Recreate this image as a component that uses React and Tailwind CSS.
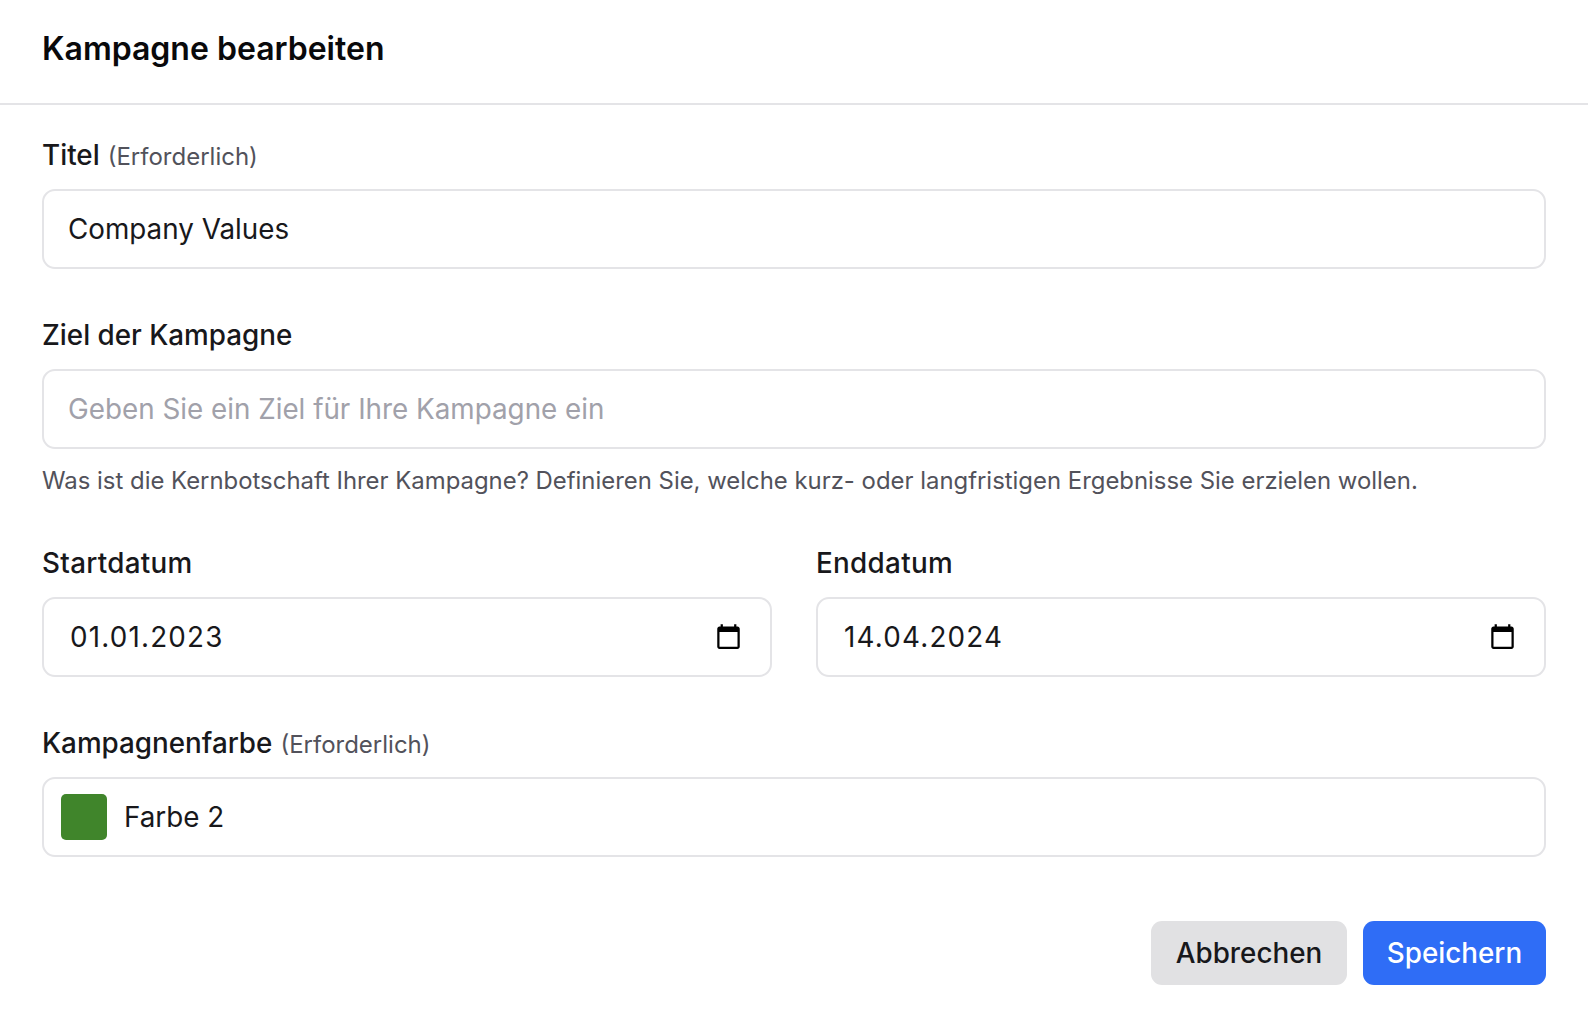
import React from 'react';

const CalendarIcon = () => (
  <svg viewBox="0 0 24 24" className="mb-[2px] h-[27px] w-[27px] shrink-0" fill="#000">
    <path d="M20 3h-1V1h-2v2H7V1H5v2H4c-1.1 0-2 .9-2 2v16c0 1.1.9 2 2 2h16c1.1 0 2-.9 2-2V5c0-1.1-.9-2-2-2zm0 18H4V8h16v13z" />
  </svg>
);

const Label = ({ children, hint, className = '' }) => (
  <div className={`flex items-baseline gap-[8px] h-[34px] text-[27.8px] leading-[32px] font-medium text-[#18181b] ${className}`}>
    {children}
    {hint && <span className="text-[24px] font-normal text-[#52525b]">{hint}</span>}
  </div>
);

const DateField = ({ label, value }) => (
  <div className="flex-1">
    <Label className="tracking-[0.3px]">{label}</Label>
    <div className="mt-[16px] flex h-[80px] items-center justify-between rounded-[13px] border-2 border-[#e4e4e7] pl-[26px] pr-[28px]">
      <span className="pt-[2px] text-[27.8px] tracking-[1.2px] text-[#18181b]">{value}</span>
      <CalendarIcon />
    </div>
  </div>
);

export default function App() {
  return (
    <div className="h-[1012px] bg-white font-['Inter',sans-serif]">
      <div className="flex h-[105px] items-center border-b-2 border-[#e4e4e7] px-[42px] pb-[6px]">
        <h1 className="text-[32px] font-semibold text-[#09090b]">Kampagne bearbeiten</h1>
      </div>

      <div className="px-[42px] pt-[34px]">
        <Label hint="(Erforderlich)">Titel</Label>
        <input
          defaultValue="Company Values"
          className="mt-[16px] h-[80px] w-full rounded-[13px] border-2 border-[#e4e4e7] px-[24px] text-[27.8px] text-[#18181b] outline-none"
        />

        <div className="mt-[50px]">
          <Label>Ziel der Kampagne</Label>
        </div>
        <input
          placeholder="Geben Sie ein Ziel für Ihre Kampagne ein"
          className="mt-[16px] h-[80px] w-full rounded-[13px] border-2 border-[#e4e4e7] px-[24px] text-[27.8px] text-[#18181b] outline-none placeholder:text-[#a1a1aa]"
        />
        <p className="mt-[15px] text-[23.9px] leading-[34px] text-[#52525b]">
          Was ist die Kernbotschaft Ihrer Kampagne? Definieren Sie, welche kurz- oder langfristigen Ergebnisse Sie erzielen wollen.
        </p>

        <div className="mt-[49px] flex gap-[44px]">
          <DateField label="Startdatum" value="01.01.2023" />
          <DateField label="Enddatum" value="14.04.2024" />
        </div>

        <div className="mt-[50px]">
          <Label hint="(Erforderlich)">Kampagnenfarbe</Label>
        </div>
        <div className="mt-[16px] flex h-[80px] items-center gap-[17px] rounded-[13px] border-2 border-[#e4e4e7] pl-[17px]">
          <div className="h-[46px] w-[46px] rounded-[5px] bg-[#40852b]" />
          <span className="pt-[2px] text-[27.8px] text-[#18181b]">Farbe 2</span>
        </div>

        <div className="mt-[64px] flex justify-end gap-[16px]">
          <button className="h-[64px] w-[196px] rounded-[11px] bg-[#e1e1e3] pt-[2px] text-[27.8px] font-medium text-[#18181b]">
            Abbrechen
          </button>
          <button className="h-[64px] w-[183px] rounded-[11px] bg-[#2f6df6] pt-[2px] text-[27.8px] font-medium text-white">
            Speichern
          </button>
        </div>
      </div>
    </div>
  );
}
